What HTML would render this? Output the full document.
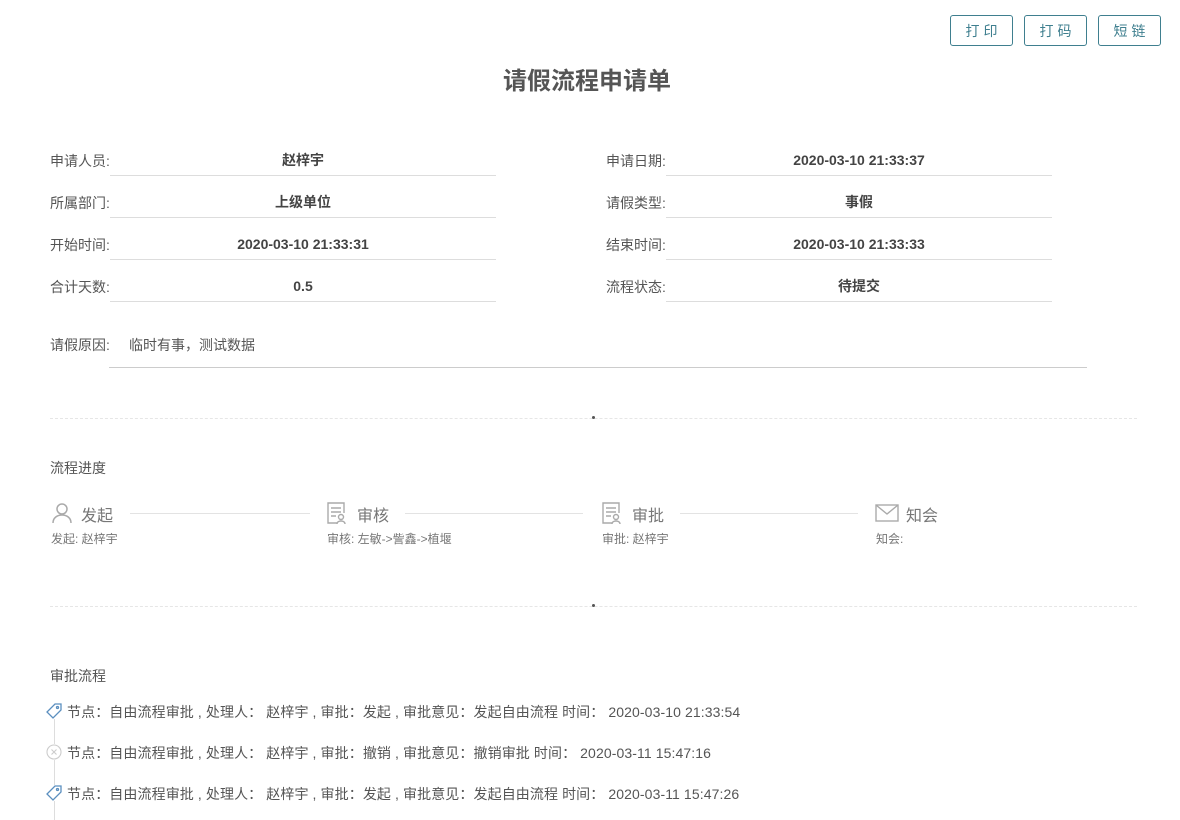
<!DOCTYPE html><html><head><meta charset="utf-8"><style>
body{margin:0;width:1180px;height:820px;background:#fff;font-family:"Liberation Sans","Noto Sans CJK SC",sans-serif;color:#555;position:relative;overflow:hidden}
.a{position:absolute;white-space:nowrap}
.btn{position:absolute;top:15px;height:31px;width:63px;border:1px solid #3f7f8f;border-radius:3px;color:#3f7f8f;font-size:14px;line-height:30px;text-align:center;letter-spacing:4px;text-indent:4px;box-sizing:border-box}
.lb{position:absolute;font-size:14px;color:#555}
.v{position:absolute;font-size:14px;font-weight:bold;color:#444;text-align:center;width:386px;border-bottom:1px solid #ddd;height:24px;line-height:18px}
.dash{position:absolute;left:50px;width:1087px;border-top:1px dashed #e6e6e6}
.st{position:absolute;font-size:16px;color:#777}
.ss{position:absolute;font-size:12px;color:#777}
.ln{position:absolute;height:1px;background:#e3e3e3;top:513px}
.t{position:absolute;left:67px;font-size:14px;color:#555;letter-spacing:0.1px}
</style></head><body>
<div class="btn" style="left:950px">打印</div>
<div class="btn" style="left:1024px">打码</div>
<div class="btn" style="left:1098px">短链</div>
<div class="a" style="left:0;width:1174px;text-align:center;top:61px;font-size:24px;font-weight:bold;color:#555">请假流程申请单</div>

<div class="lb" style="left:50px;top:151px">申请人员:</div><div class="v" style="left:110px;top:151px">赵梓宇</div>
<div class="lb" style="left:606px;top:151px">申请日期:</div><div class="v" style="left:666px;top:151px">2020-03-10 21:33:37</div>
<div class="lb" style="left:50px;top:193px">所属部门:</div><div class="v" style="left:110px;top:193px">上级单位</div>
<div class="lb" style="left:606px;top:193px">请假类型:</div><div class="v" style="left:666px;top:193px">事假</div>
<div class="lb" style="left:50px;top:235px">开始时间:</div><div class="v" style="left:110px;top:235px">2020-03-10 21:33:31</div>
<div class="lb" style="left:606px;top:235px">结束时间:</div><div class="v" style="left:666px;top:235px">2020-03-10 21:33:33</div>
<div class="lb" style="left:50px;top:277px">合计天数:</div><div class="v" style="left:110px;top:277px">0.5</div>
<div class="lb" style="left:606px;top:277px">流程状态:</div><div class="v" style="left:666px;top:277px">待提交</div>
<div class="lb" style="left:50px;top:335px">请假原因:</div><div class="lb" style="left:129px;top:335px">临时有事，测试数据</div>
<div class="a" style="left:109px;top:367px;width:978px;height:1px;background:#ccc"></div>

<div class="dash" style="top:418px"></div><div class="a" style="left:592px;top:416px;width:3px;height:3px;background:#555;border-radius:50%"></div>
<div class="lb" style="left:50px;top:458px">流程进度</div>

<svg class="a" style="left:51px;top:502px" width="22" height="22" viewBox="0 0 22 22" fill="none" stroke="#aaa" stroke-width="1.5"><circle cx="11" cy="7" r="5"/><path d="M2 21c0-5 4-8 9-8s9 3 9 8"/></svg>
<div class="st" style="left:81px;top:502px">发起</div><div class="ln" style="left:130px;width:180px"></div>
<div class="ss" style="left:51px;top:530px">发起: 赵梓宇</div>

<svg class="a" style="left:327px;top:502px" width="20" height="23" viewBox="0 0 20 23" fill="none" stroke="#aaa" stroke-width="1.4"><path d="M10 21H1V1h16v10"/><path d="M4 6h10M4 10h10M4 14h5"/><circle cx="14" cy="15" r="2.5"/><path d="M10 22c0-2 2-3 4-3s4 1 4 3"/></svg>
<div class="st" style="left:357px;top:502px">审核</div><div class="ln" style="left:405px;width:178px"></div>
<div class="ss" style="left:327px;top:530px">审核: 左敏->訾鑫->植堰</div>

<svg class="a" style="left:602px;top:502px" width="20" height="23" viewBox="0 0 20 23" fill="none" stroke="#aaa" stroke-width="1.4"><path d="M10 21H1V1h16v10"/><path d="M4 6h10M4 10h10M4 14h5"/><circle cx="14" cy="15" r="2.5"/><path d="M10 22c0-2 2-3 4-3s4 1 4 3"/></svg>
<div class="st" style="left:632px;top:502px">审批</div><div class="ln" style="left:680px;width:178px"></div>
<div class="ss" style="left:602px;top:530px">审批: 赵梓宇</div>

<svg class="a" style="left:875px;top:504px" width="24" height="18" viewBox="0 0 24 18" fill="none" stroke="#aaa" stroke-width="1.4"><rect x="1" y="1" width="22" height="16"/><path d="M1 1l11 9 11-9"/></svg>
<div class="st" style="left:906px;top:502px">知会</div>
<div class="ss" style="left:876px;top:530px">知会:</div>

<div class="dash" style="top:606px"></div><div class="a" style="left:592px;top:604px;width:3px;height:3px;background:#555;border-radius:50%"></div>
<div class="lb" style="left:50px;top:666px">审批流程</div>

<div class="a" style="left:54px;top:718px;width:1px;height:102px;background:#ddd"></div>
<svg class="a" style="left:46px;top:703px;background:#fff" width="16" height="16" viewBox="0 0 16 16" fill="none" stroke="#5b8fbf" stroke-width="1.3"><path d="M9 1h6v6l-8 8-6-6z"/><circle cx="11.5" cy="4.5" r="1"/></svg>
<div class="t" style="top:702px">节点：自由流程审批 , 处理人：&nbsp;赵梓宇 , 审批：发起 , 审批意见：发起自由流程 时间：&nbsp;2020-03-10 21:33:54</div>
<svg class="a" style="left:46px;top:744px;background:#fff" width="16" height="16" viewBox="0 0 16 16" fill="none" stroke="#ccc" stroke-width="1.1"><circle cx="8" cy="8" r="7"/><path d="M5.5 5.5l5 5M10.5 5.5l-5 5"/></svg>
<div class="t" style="top:743px">节点：自由流程审批 , 处理人：&nbsp;赵梓宇 , 审批：撤销 , 审批意见：撤销审批 时间：&nbsp;2020-03-11 15:47:16</div>
<svg class="a" style="left:46px;top:785px;background:#fff" width="16" height="16" viewBox="0 0 16 16" fill="none" stroke="#5b8fbf" stroke-width="1.3"><path d="M9 1h6v6l-8 8-6-6z"/><circle cx="11.5" cy="4.5" r="1"/></svg>
<div class="t" style="top:784px">节点：自由流程审批 , 处理人：&nbsp;赵梓宇 , 审批：发起 , 审批意见：发起自由流程 时间：&nbsp;2020-03-11 15:47:26</div>
</body></html>
